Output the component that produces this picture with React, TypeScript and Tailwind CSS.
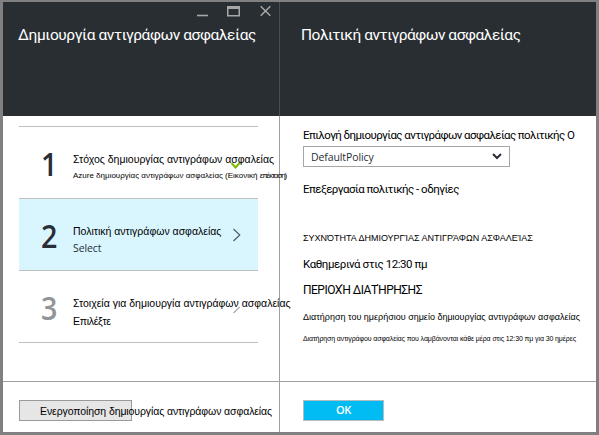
import type { ReactNode } from 'react';

const latin = "font-['Open_Sans','Noto_Sans',sans-serif]";

function Step({ n, title, sub, mark, className = '', numberClass = 'text-[#292e36]' }: {
  n: number; title: ReactNode; sub: ReactNode; mark: ReactNode; className?: string; numberClass?: string;
}) {
  return (
    <div className={`relative flex h-[72px] shrink-0 border-b border-[#bfbfbf] ${className}`}>
      <div className="absolute right-[16px] top-[29px]">{mark}</div>
      <div className="w-[54px] shrink-0 pl-[22px] pt-[20px]">
        <span className={`inline-block origin-left scale-x-[.87] text-[33px] leading-[33px] font-semibold ${latin} ${numberClass}`}>{n}</span>
      </div>
      <div className="relative flex shrink-0 flex-col pt-[24px] whitespace-nowrap text-[10.5px] leading-4 text-black">
        <div>{title}</div>
        <div>{sub}</div>
      </div>
    </div>
  );
}

function Chevron({ color, d = 'M1.5 1 7.8 7 1.5 13' }: { color: string; d?: string }) {
  return (
    <svg width="10" height="14" viewBox="0 0 10 14" fill="none" stroke={color} strokeWidth="1.1">
      <path d={d} />
    </svg>
  );
}

export default function App() {
  return (
    <div className="flex h-[435px] w-[599px] overflow-hidden border-t-2 border-r-[3px] border-b-[3px] border-l-[3px] border-[#808080] bg-white font-['Liberation_Sans',Arial,sans-serif] text-black">
      <section className="relative z-10 flex w-[277px] shrink-0 flex-col border-r border-[#a0a0a0]">
        <header className="mr-[-1px] h-[114px] shrink-0 border-r border-[#4a4e52] bg-[#292e32] text-white">
          <div className="flex h-[18px] items-center justify-end pr-[8px]">
            <svg className="mr-[19px]" width="11" height="12" viewBox="0 0 11 12"><path d="M0 10.5H11" stroke="#a5a7a9" strokeWidth="1.6" /></svg>
            <svg className="mr-[20px]" width="13" height="12" viewBox="0 0 13 12"><path d="M.75 2.5H12.25V10.75H.75Z" fill="none" stroke="#a5a7a9" strokeWidth="1.5" /><path d="M0 1H13V4H0Z" fill="#a5a7a9" /></svg>
            <svg width="11" height="12" viewBox="0 0 11 12"><path d="M.7 1.2 10.3 10.8M10.3 1.2.7 10.8" stroke="#a5a7a9" strokeWidth="1.5" /></svg>
          </div>
          <h1 className="pt-[5px] pl-[15px] font-['Roboto',sans-serif] text-[15.5px] leading-5 tracking-[-0.41px] whitespace-nowrap">Δημιουργία αντιγράφων ασφαλείας</h1>
        </header>
        <div className="mt-[10px] ml-4 flex w-[239px] flex-col border-t border-[#bfbfbf]">
          <Step
            n={1}
            title="Στόχος δημιουργίας αντιγράφων ασφαλείας"
            sub={<span className="relative top-[-1px] text-[8px]">Azure δημιουργίας αντιγράφων ασφαλείας (Εικονική <span className="tracking-[-1.1px]">επέκταση)</span></span>}
            mark={<svg className="mt-[4px]" width="13" height="10" viewBox="0 0 13 10" fill="none" stroke="#7fba00" strokeWidth="2"><path d="M2.5 3 6.5 7.5 11.5 2" /></svg>}
          />
          <Step
            n={2}
            className="bg-[#d9f6ff]"
            title="Πολιτική αντιγράφων ασφαλείας"
            sub={<span className={`relative top-[1px] text-[10.5px] tracking-[-0.1px] text-[#292e36] ${latin}`}>Select</span>}
            mark={<Chevron color="#4a5860" />}
          />
          <Step
            n={3}
            numberClass="text-[#929497]"
            title="Στοιχεία για δημιουργία αντιγράφων ασφαλείας"
            sub={<span className="inline-block pt-[2px] tracking-[-0.3px]">Επιλέξτε</span>}
            mark={<Chevron color="#a5a7a9" d="M1.5 1 3 2.5M7.8 7 1.5 13" />}
          />
        </div>
        <footer className="mt-auto h-[51px] border-t border-[#a0a0a0] pt-[18px] pl-4">
          <button className="flex h-[21px] w-[113px] items-center border border-[#9a9a9a] bg-[#e6e6e6] pl-5 text-[10.5px] leading-4 tracking-[-0.1px] whitespace-nowrap">
            Ενεργοποίηση δημιουργίας αντιγράφων ασφαλείας
          </button>
        </footer>
      </section>
      <section className="flex min-w-0 flex-1 flex-col whitespace-nowrap">
        <header className="h-[114px] shrink-0 bg-[#292e32] pt-[23px] pl-[21px] text-white">
          <h1 className="font-['Roboto',sans-serif] text-[15.5px] leading-5 tracking-[-0.47px]">Πολιτική αντιγράφων ασφαλείας</h1>
        </header>
        <div className="flex flex-col pl-[23px] text-[11px] leading-4">
          <div className="pt-[11px] font-['Roboto',sans-serif] text-[11.5px] tracking-[-0.58px]">Επιλογή δημιουργίας αντιγράφων ασφαλείας πολιτικής O</div>
          <div className="mt-[3px] flex h-[21px] w-[207px] items-center justify-between border border-[#a6a6a6] pr-[7px] pl-[7px]">
            <span className={`text-[10.5px] tracking-[-0.1px] text-[#292e36] ${latin}`}>DefaultPolicy</span>
            <svg width="10" height="7" viewBox="0 0 10 7" fill="none" stroke="#292e36" strokeWidth="2"><path d="M1 1 5 5 9 1" /></svg>
          </div>
          <div className="mt-[14px] font-['Roboto',sans-serif] text-[11.5px] tracking-[-0.52px]">Επεξεργασία πολιτικής - οδηγίες</div>
          <div className="mt-[33px] text-[9px]">ΣΥΧΝΌΤΗΤΑ ΔΗΜΙΟΥΡΓΊΑΣ ΑΝΤΙΓΡΆΦΩΝ ΑΣΦΑΛΕΊΑΣ</div>
          <div className="mt-[10px] font-['Roboto',sans-serif] text-[11.5px] tracking-[-0.43px]">Καθημερινά στις 12:30 πμ</div>
          <div className="mt-[10px] font-['Roboto',sans-serif] text-[12px] tracking-[-0.52px]">ΠΕΡΙΟΧΉ ΔΙΑΤΉΡΗΣΗΣ</div>
          <div className="mt-[11px] text-[9px]">Διατήρηση του ημερήσιου σημείο δημιουργίας αντιγράφων ασφαλείας</div>
          <div className="mt-[6px] text-[7px] tracking-[-0.11px]">Διατήρηση αντιγράφου ασφαλείας που λαμβάνονται κάθε μέρα στις 12:30 πμ για 30 ημέρες</div>
        </div>
        <footer className="mt-auto h-[51px] border-t border-[#a0a0a0] pt-[18px] pl-[23px]">
          <button className={`flex h-[21px] w-[81px] items-center justify-center border border-[#b5bcc0] bg-[#00bcf2] text-[11px] font-semibold tracking-[-0.4px] text-white ${latin}`}>OK</button>
        </footer>
      </section>
    </div>
  );
}
